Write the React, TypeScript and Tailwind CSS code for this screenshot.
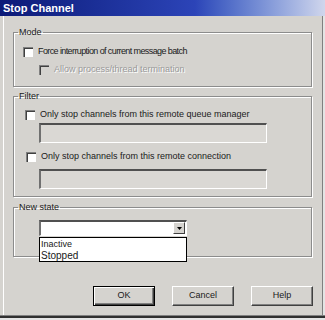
import React from "react";

const font = "font-['Liberation_Sans',Arial,sans-serif]";

const CheckBox = ({ disabled }: { disabled?: boolean }) => (
  <span
    className={
      "block w-[10px] h-[10px] shrink-0 border-t border-l border-[#808080] border-b-white border-r-white shadow-[inset_1px_1px_0_#404040] " +
      (disabled ? "bg-[#d5d3cf]" : "bg-white")
    }
  />
);

const Row = ({
  label,
  disabled,
  className,
  textClass,
}: {
  label: string;
  disabled?: boolean;
  className?: string;
  textClass?: string;
}) => (
  <div className={"flex items-center h-[13px] gap-[5px] " + (className ?? "")}>
    <CheckBox disabled={disabled} />
    <span
      className={
        "text-[9px] leading-none whitespace-nowrap " +
        (disabled ? "text-[#9a9a9a] [text-shadow:1px_1px_0_#fff] " : "text-[#202020] ") +
        (textClass ?? "")
      }
    >
      {label}
    </span>
  </div>
);

const TextBox = ({ className }: { className?: string }) => (
  <div
    className={
      "w-[228px] h-[20px] bg-[#dad8d4] border-t-2 border-l-2 border-t-[#505050] border-l-[#707070] border-b border-r border-b-white border-r-white " +
      (className ?? "")
    }
  />
);

const Group = ({ title, className, children }: { title: string; className?: string; children: React.ReactNode }) => (
  <fieldset
    className={
      "border border-[#8c8c8c] shadow-[inset_1px_1px_0_#fff,1px_1px_0_#fff] px-0 pb-0 m-0 min-w-0 " + (className ?? "")
    }
  >
    <legend className="ml-[4px] px-[1px] text-[9px] leading-[11px] text-[#202020]">{title}</legend>
    {children}
  </fieldset>
);

const Button = ({ label, isDefault }: { label: string; isDefault?: boolean }) => (
  <button
    className={
      "w-[62px] h-[20px] text-[9px] text-[#202020] bg-[#d5d3cf] flex items-center justify-center " +
      (isDefault
        ? "border border-black shadow-[inset_1px_1px_0_#fff,inset_-1px_-1px_0_#404040,inset_-2px_-2px_0_#808080]"
        : "border-t border-l border-white border-b border-r border-b-[#404040] border-r-[#404040] shadow-[inset_-1px_-1px_0_#808080]")
    }
  >
    {label}
  </button>
);

export default function App() {
  return (
    <div
      className={
        "w-[325px] h-[320px] bg-[#d5d3cf] flex flex-col overflow-hidden " +
        font +
        " shadow-[inset_0_-2px_0_#e4e4e4,inset_0_-4px_0_#303030,inset_0_-5px_0_#808080,inset_-2px_0_0_#e4e4e4,inset_-3px_0_0_#808080,inset_3px_0_0_#d5d3cf,inset_4px_0_0_#fff]"
      }
    >
      <div className="h-[16px] shrink-0 bg-gradient-to-r from-[#0c1a78] via-[#2c44b8] via-60% to-[#d0d6ec] flex items-center pl-[3px]">
        <span className="text-white font-bold text-[11px] leading-none">Stop Channel</span>
      </div>

      <div className="px-[13px] flex flex-col">
        <Group title="Mode" className="mt-[11px] h-[60px]">
          <Row
            label="Force interruption of current message batch"
            className="ml-[9px] mt-[7px]"
            textClass="tracking-[-0.6px]"
          />
          <Row label="Allow process/thread termination" disabled className="ml-[25px] mt-[5px]" />
        </Group>

        <Group title="Filter" className="mt-[4px] h-[106px]">
          <Row label="Only stop channels from this remote queue manager" className="ml-[11px] mt-[6px]" />
          <TextBox className="ml-[25px] mt-[2px]" />
          <Row label="Only stop channels from this remote connection" className="ml-[12px] mt-[7px]" />
          <TextBox className="ml-[25px] mt-[6px]" />
        </Group>

        <Group title="New state" className="mt-[5px] h-[55px]">
          <div className="relative ml-[25px] mt-[7px] w-[148px] h-[16px] bg-white border-t-2 border-l-2 border-t-[#505050] border-l-[#707070] border-b border-r border-b-white border-r-white flex justify-end items-start">
            <div className="w-[12px] h-[12px] mr-[1px] bg-[#d5d3cf] border-t border-l border-white border-b border-r border-b-[#404040] border-r-[#404040] flex items-center justify-center">
              <svg width="5" height="3" viewBox="0 0 5 3">
                <path d="M0 0h5L2.5 3z" fill="#000" />
              </svg>
            </div>
            <div className="absolute left-[-2px] top-[15px] w-[148px] h-[25px] bg-white border border-black flex flex-col pl-[1px] pt-[1px] z-10">
              <span className="text-[9px] leading-[11px] text-[#202020]">Inactive</span>
              <span className="text-[10px] leading-[11px] text-[#202020]">Stopped</span>
            </div>
          </div>
        </Group>

        <div className="flex justify-end gap-[17px] mt-[29px] mr-[-1px]">
          <Button label="OK" isDefault />
          <Button label="Cancel" />
          <Button label="Help" />
        </div>
      </div>
    </div>
  );
}
